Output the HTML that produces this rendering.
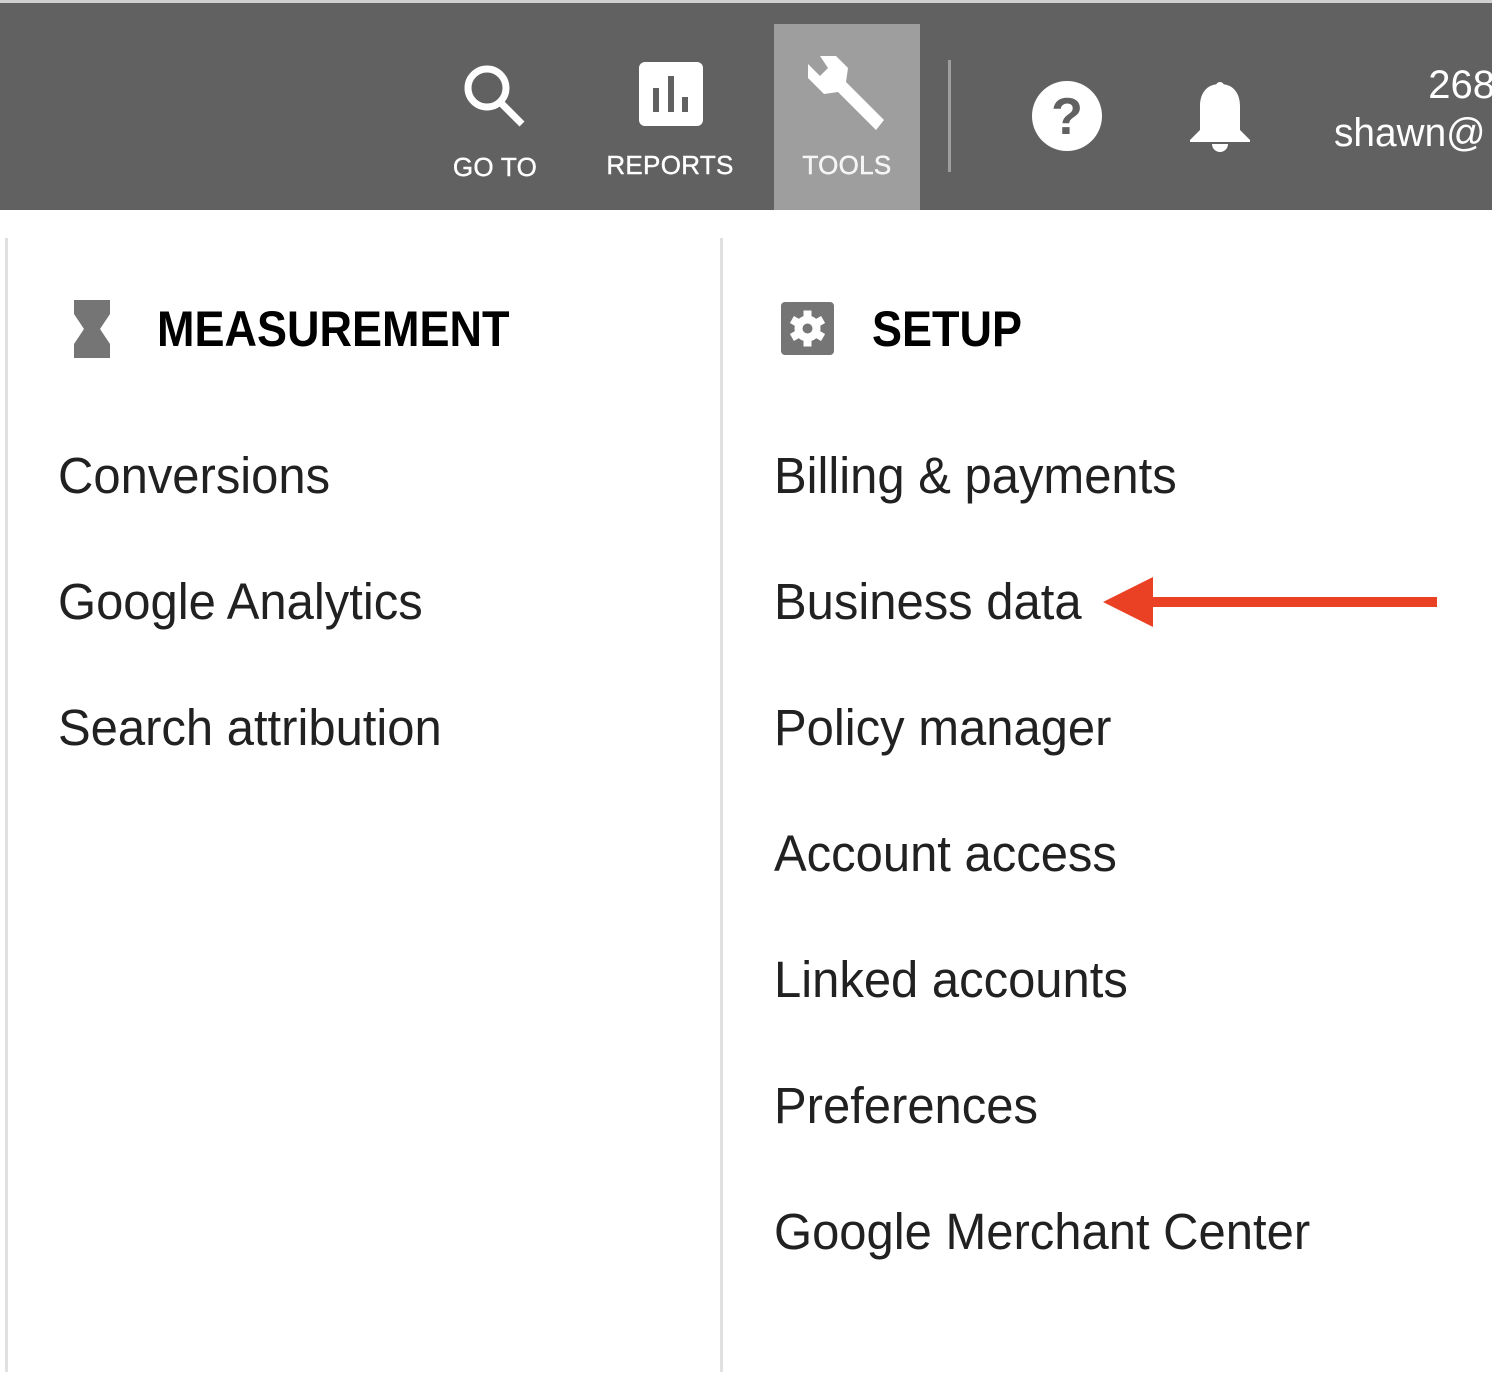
<!DOCTYPE html>
<html><head><meta charset="utf-8"><style>
html,body{margin:0;padding:0;width:1492px;height:1394px;background:#fff;overflow:hidden;position:relative;font-family:"Liberation Sans",sans-serif;}
.bar{position:absolute;left:0;top:3px;width:1492px;height:207px;background:#616161;}
.topline{position:absolute;left:0;top:0;width:1492px;height:3px;background:#d0d0d0;}
.tools{position:absolute;left:774px;top:24px;width:146px;height:186px;background:#9e9e9e;}
.nl{position:absolute;top:150px;color:#fff;font-size:26px;width:200px;text-align:center;letter-spacing:0.3px;-webkit-text-stroke:0.4px #fff;}
.abs{position:absolute;}
.item{position:absolute;font-size:51px;color:#212121;white-space:nowrap;transform:scaleX(0.96);transform-origin:0 0;line-height:1;}
.head{position:absolute;font-size:50px;font-weight:bold;color:#000;white-space:nowrap;transform:scaleX(0.9);transform-origin:0 0;line-height:1;}
</style></head><body>
<div class="topline"></div>
<div class="bar"></div>
<div class="tools"></div>
<svg class="abs" style="left:460px;top:60px" width="70" height="70" viewBox="0 0 70 70"><circle cx="27" cy="28" r="19" fill="none" stroke="#fff" stroke-width="7"/><line x1="40" y1="42" x2="62" y2="64" stroke="#fff" stroke-width="7"/></svg>
<svg class="abs" style="left:639px;top:62px" width="64" height="64" viewBox="0 0 64 64"><rect width="64" height="64" rx="6" fill="#fff"/><rect x="14" y="26" width="6" height="24" fill="#616161"/><rect x="29" y="14" width="6" height="36" fill="#616161"/><rect x="43" y="35" width="6" height="15" fill="#616161"/></svg>
<svg class="abs" style="left:806px;top:54px" width="82" height="80" viewBox="0 0 82 80"><path d="M14 2 L30 2 L42 14 L40 28 L78 66 L70 76 L32 38 L18 40 L2 24 L2 10 L14 22 L22 14 Z" fill="#fff"/></svg>
<div class="nl" style="left:395px;top:152px">GO TO</div>
<div class="nl" style="left:570px">REPORTS</div>
<div class="nl" style="left:747px;color:#f4f4f4">TOOLS</div>
<div class="abs" style="left:948px;top:60px;width:3px;height:112px;background:#9e9e9e"></div>
<svg class="abs" style="left:1031px;top:80px" width="72" height="72" viewBox="0 0 72 72"><circle cx="36" cy="36" r="35" fill="#fff"/><text x="36" y="54" text-anchor="middle" font-family="Liberation Sans" font-weight="bold" font-size="52" fill="#616161">?</text></svg>
<svg class="abs" style="left:1188px;top:80px" width="64" height="74" viewBox="0 0 64 74"><circle cx="32" cy="6" r="4" fill="#fff"/><path d="M32 4 C18 4 12 14 12 26 L12 50 L2 60 L2 62 L62 62 L62 60 L52 50 L52 26 C52 14 46 4 32 4Z" fill="#fff"/><path d="M24 64 A8 8 0 0 0 40 64Z" fill="#fff"/></svg>
<div class="abs" style="left:1292px;top:62px;color:#fff;font-size:40px;width:203px;text-align:right;line-height:46px">268</div>
<div class="abs" style="left:1334px;top:110px;color:#fff;font-size:40px;line-height:46px;white-space:nowrap;transform:scaleX(0.97);transform-origin:0 0">shawn@</div>

<div class="abs" style="left:5px;top:238px;width:3px;height:1134px;background:#e0e0e0"></div>
<div class="abs" style="left:720px;top:238px;width:3px;height:1134px;background:#e0e0e0"></div>

<svg class="abs" style="left:74px;top:300px" width="36" height="58" viewBox="0 0 36 58"><path d="M0 0 L36 0 L36 14 L26 29 L36 44 L36 58 L0 58 L0 44 L10 29 L0 14Z" fill="#757575"/></svg>
<div class="head" style="left:157px;top:304px">MEASUREMENT</div>
<svg class="abs" style="left:781px;top:302px" width="53" height="53" viewBox="0 0 53 53"><rect width="53" height="53" rx="4" fill="#757575"/><g transform="translate(26.5 26.5)" fill="#fff"><circle r="13"/><g><rect x="-4" y="-18" width="8" height="36"/><rect x="-4" y="-18" width="8" height="36" transform="rotate(60)"/><rect x="-4" y="-18" width="8" height="36" transform="rotate(120)"/></g><circle r="5" fill="#757575"/></g></svg>
<div class="head" style="left:872px;top:304px">SETUP</div>

<div class="item" style="left:58px;top:450px">Conversions</div>
<div class="item" style="left:58px;top:576px">Google Analytics</div>
<div class="item" style="left:58px;top:702px">Search attribution</div>

<div class="item" style="left:774px;top:450px">Billing &amp; payments</div>
<div class="item" style="left:774px;top:576px">Business data</div>
<div class="item" style="left:774px;top:702px">Policy manager</div>
<div class="item" style="left:774px;top:828px">Account access</div>
<div class="item" style="left:774px;top:954px">Linked accounts</div>
<div class="item" style="left:774px;top:1080px">Preferences</div>
<div class="item" style="left:774px;top:1206px">Google Merchant Center</div>

<svg class="abs" style="left:1100px;top:574px" width="340" height="56" viewBox="0 0 340 56"><path d="M3 28 L53 3 L53 53Z" fill="#ea4125"/><rect x="50" y="23" width="287" height="10" fill="#ea4125"/></svg>
</body></html>
